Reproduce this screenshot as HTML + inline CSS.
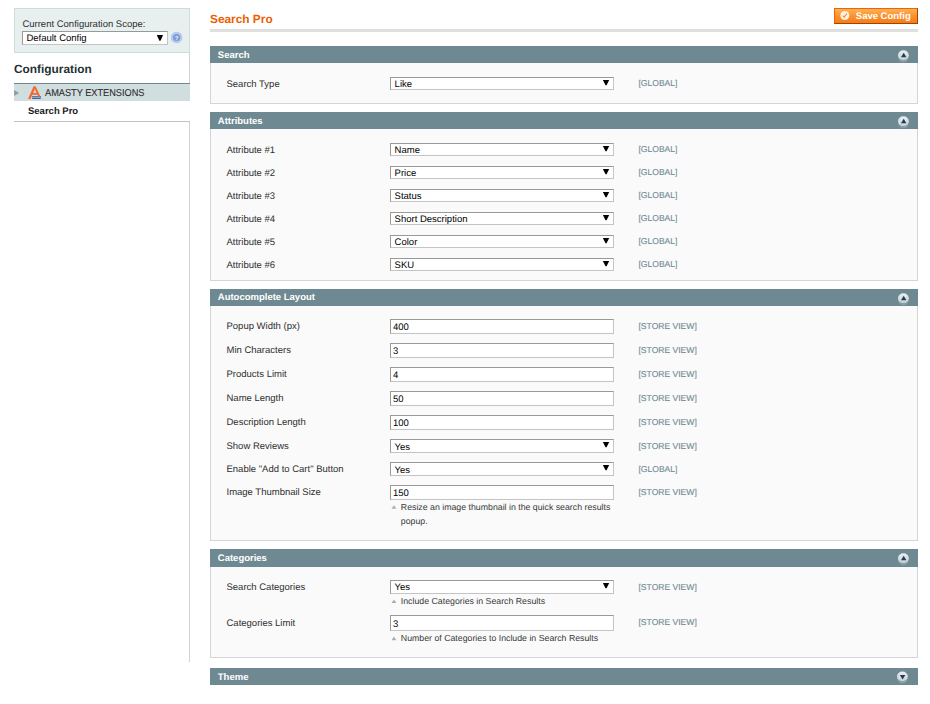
<!DOCTYPE html>
<html><head><meta charset="utf-8"><title>Search Pro / Configuration</title>
<style>
html,body{margin:0;padding:0;background:#fff;}
body{width:930px;height:704px;position:relative;overflow:hidden;font-family:"Liberation Sans",Arial,Helvetica,sans-serif;font-size:9.5px;color:#2f2f2f;text-rendering:geometricPrecision;}
h3,h4,p,dl,dt,dd,label,span,button{margin:0;padding:0;font-weight:normal;font-family:inherit;}
.abs,.t,.head,.fs,.sel,.inp,.btn,.switcher{position:absolute;}
.t{white-space:nowrap;transform-origin:0 0;}
.switcher{left:14px;top:8px;width:176px;height:45px;box-sizing:border-box;background:#e7efef;border:1px solid #cddddd;}
.head{left:210px;width:708px;background:#6f8992;}
.fs{left:210px;width:708px;box-sizing:border-box;background:#fafafa;border:1px solid #d6d6d6;border-top:0;}
.sel,.inp{box-sizing:border-box;background:#fff;border:1px solid;border-color:#999 #c4c4c4 #c4c4c4 #999;}
.btn{left:834px;top:8px;width:84px;height:16px;box-sizing:border-box;border:1px solid;border-color:#ed6502 #a04300 #a04300 #ed6502;background:linear-gradient(#ffb056 0%,#fb9430 45%,#f77c16 100%);}
</style></head>
<body>
<aside>
<div class="switcher"></div>
<label class="t" style="left:22.4px;top:18px;font-size:9.5px;line-height:14.25px;color:#2f2f2f;">Current Configuration Scope:</label>
<div class="sel" style="left:22px;top:31px;width:146px;height:14px"></div>
<span class="t" style="left:26.4px;top:32px;font-size:9.5px;line-height:14.25px;color:#000;">Default Config</span>
<svg class="abs" style="left:156px;top:35px" width="8" height="7"><g transform="translate(0.8 0.1)"><path d="M0 0 L6.3 0 L3.7 5.7 L2.6 5.7 Z" fill="#000"/></g></svg>
<svg class="abs" style="left:170px;top:31px" width="13" height="13"><g transform="translate(0.6 0.5)"><circle cx="6" cy="6" r="5.75" fill="#afc4e6"/><circle cx="6" cy="6" r="4.7" fill="none" stroke="#c6d6ee" stroke-width="0.5"/><circle cx="6" cy="6" r="3.6" fill="#7b9edb"/><text x="6" y="8" font-size="5.6" font-weight="bold" fill="#f4f8fd" text-anchor="middle" font-family="Liberation Sans, sans-serif">?</text></g></svg>
<h3 class="t" style="left:14px;top:61px;font-size:11.875px;line-height:17.81px;color:#253033;font-weight:bold;">Configuration</h3>
<div class="abs" style="left:189px;top:53px;width:1px;height:609px;background:#d3d3d3"></div>
<dl>
<div class="abs" style="left:14px;top:83px;width:176px;height:18px;background:#d1dedf;border-top:1px solid #6f8992;box-sizing:border-box"></div>
<svg class="abs" style="left:14px;top:89px" width="7" height="8"><g transform="translate(0.1 0.9)"><path d="M0 0 L5 3.1 L0 6.2 Z" fill="#8a9ea6"/></g></svg>
<svg class="abs" style="left:28px;top:86px" width="14" height="14"><g transform="translate(0 0.1)"><path d="M0 12.9 L5.6 0.1 L7.6 0.1 L12.9 11.4 L10.7 11.4 L9.4 8.7 L4.4 8.7 L2.5 12.9 Z M5.3 6.8 L8.5 6.8 L6.7 2.8 Z" fill="#f26a33" fill-rule="evenodd"/><rect x="4.3" y="9.9" width="8.6" height="2.9" fill="#3c5482"/><text x="4.7" y="12.2" font-size="2.6" font-weight="bold" fill="#dfe6f2" font-family="Liberation Sans, sans-serif">amasty</text></g></svg>
<dt class="t" style="left:45.0px;top:86px;font-size:10px;line-height:15.0px;color:#2b2b2b;transform:scaleX(0.919);-webkit-text-stroke:0.1px #2b2b2b;">AMASTY EXTENSIONS</dt>
<div class="abs" style="left:14px;top:101px;width:177px;height:20px;background:#fff"></div>
<dd class="t" style="left:28px;top:105px;font-size:9.5px;line-height:14.25px;color:#1c1c1c;font-weight:bold;">Search Pro</dd>
</dl>
<div class="abs" style="left:14px;top:121px;width:176px;height:1px;background:#c3c3c3"></div>
</aside>
<main>
<header>
<h3 class="t" style="left:210px;top:11px;font-size:11.875px;line-height:17.81px;color:#eb5e00;font-weight:bold;">Search Pro</h3>
<div class="abs" style="left:210px;top:29px;width:708px;height:3px;background:#dfdfdf"></div>
<button class="btn" type="button"></button>
<svg class="abs" style="left:839px;top:10px" width="11" height="11"><g transform="translate(0.8 0.5)"><circle cx="5" cy="5" r="4.5" fill="#fff4e6"/><path d="M2.9 5.1 L4.4 6.7 L7.2 3.2" stroke="#f68d36" stroke-width="1.15" fill="none"/></g></svg>
<span class="t" style="left:855.8px;top:10px;font-size:9.5px;line-height:14.25px;color:#fff;font-weight:bold;">Save Config</span>
</header>
<section>
<div class="head" style="top:46px;height:17px"></div>
<h4 class="t" style="left:217.8px;top:49px;font-size:9.5px;line-height:14.25px;color:#fff;font-weight:bold;">Search</h4>
<svg class="abs" style="left:896px;top:48px" width="15" height="17"><g transform="translate(0.4 0.1)"><defs><linearGradient id="g46" x1="0" y1="0" x2="0" y2="1"><stop offset="0" stop-color="#e9eef1"/><stop offset="1" stop-color="#c5d2d7"/></linearGradient></defs><g transform="translate(7 7)"><circle cx="0" cy="1.9" r="5.2" fill="#a9bbc2" opacity="0.45"/><ellipse cx="0" cy="0.1" rx="5.4" ry="4.9" fill="url(#g46)"/><path d="M-2.4 2.1 L3.0 2.1 L0.3 -2.3 Z" fill="#22395a"/></g></g></svg>
<div class="fs" style="top:63px;height:41px"></div>
<label class="t" style="left:226.5px;top:78px;font-size:9.5px;line-height:14.25px;color:#2f2f2f;">Search Type</label>
<div class="sel" style="left:390px;top:77px;width:224px;height:13px"></div>
<span class="t" style="left:394.6px;top:78px;font-size:9.5px;line-height:14.25px;color:#000;">Like</span>
<svg class="abs" style="left:602px;top:80px" width="8" height="7"><g transform="translate(0.9 0.05)"><path d="M0 0 L6.3 0 L3.7 5.3 L2.6 5.3 Z" fill="#000"/></g></svg>
<span class="t" style="left:638.5px;top:77px;font-size:8.55px;line-height:12.83px;color:#6f8992;-webkit-text-stroke:0.1px #6f8992;">[GLOBAL]</span>
</section>
<section>
<div class="head" style="top:112px;height:17px"></div>
<h4 class="t" style="left:217.8px;top:115px;font-size:9.5px;line-height:14.25px;color:#fff;font-weight:bold;">Attributes</h4>
<svg class="abs" style="left:896px;top:114px" width="15" height="17"><g transform="translate(0.4 0.1)"><defs><linearGradient id="g112" x1="0" y1="0" x2="0" y2="1"><stop offset="0" stop-color="#e9eef1"/><stop offset="1" stop-color="#c5d2d7"/></linearGradient></defs><g transform="translate(7 7)"><circle cx="0" cy="1.9" r="5.2" fill="#a9bbc2" opacity="0.45"/><ellipse cx="0" cy="0.1" rx="5.4" ry="4.9" fill="url(#g112)"/><path d="M-2.4 2.1 L3.0 2.1 L0.3 -2.3 Z" fill="#22395a"/></g></g></svg>
<div class="fs" style="top:129px;height:152px"></div>
<label class="t" style="left:226.5px;top:144px;font-size:9.5px;line-height:14.25px;color:#2f2f2f;">Attribute #1</label>
<div class="sel" style="left:390px;top:143px;width:224px;height:13px"></div>
<span class="t" style="left:394.6px;top:144px;font-size:9.5px;line-height:14.25px;color:#000;">Name</span>
<svg class="abs" style="left:602px;top:146px" width="8" height="7"><g transform="translate(0.9 0.05)"><path d="M0 0 L6.3 0 L3.7 5.3 L2.6 5.3 Z" fill="#000"/></g></svg>
<span class="t" style="left:638.5px;top:143px;font-size:8.55px;line-height:12.83px;color:#6f8992;-webkit-text-stroke:0.1px #6f8992;">[GLOBAL]</span>
<label class="t" style="left:226.5px;top:167px;font-size:9.5px;line-height:14.25px;color:#2f2f2f;">Attribute #2</label>
<div class="sel" style="left:390px;top:166px;width:224px;height:13px"></div>
<span class="t" style="left:394.6px;top:167px;font-size:9.5px;line-height:14.25px;color:#000;">Price</span>
<svg class="abs" style="left:602px;top:169px" width="8" height="7"><g transform="translate(0.9 0.05)"><path d="M0 0 L6.3 0 L3.7 5.3 L2.6 5.3 Z" fill="#000"/></g></svg>
<span class="t" style="left:638.5px;top:166px;font-size:8.55px;line-height:12.83px;color:#6f8992;-webkit-text-stroke:0.1px #6f8992;">[GLOBAL]</span>
<label class="t" style="left:226.5px;top:190px;font-size:9.5px;line-height:14.25px;color:#2f2f2f;">Attribute #3</label>
<div class="sel" style="left:390px;top:189px;width:224px;height:13px"></div>
<span class="t" style="left:394.6px;top:190px;font-size:9.5px;line-height:14.25px;color:#000;">Status</span>
<svg class="abs" style="left:602px;top:192px" width="8" height="7"><g transform="translate(0.9 0.05)"><path d="M0 0 L6.3 0 L3.7 5.3 L2.6 5.3 Z" fill="#000"/></g></svg>
<span class="t" style="left:638.5px;top:189px;font-size:8.55px;line-height:12.83px;color:#6f8992;-webkit-text-stroke:0.1px #6f8992;">[GLOBAL]</span>
<label class="t" style="left:226.5px;top:213px;font-size:9.5px;line-height:14.25px;color:#2f2f2f;">Attribute #4</label>
<div class="sel" style="left:390px;top:212px;width:224px;height:13px"></div>
<span class="t" style="left:394.6px;top:213px;font-size:9.5px;line-height:14.25px;color:#000;">Short Description</span>
<svg class="abs" style="left:602px;top:215px" width="8" height="7"><g transform="translate(0.9 0.05)"><path d="M0 0 L6.3 0 L3.7 5.3 L2.6 5.3 Z" fill="#000"/></g></svg>
<span class="t" style="left:638.5px;top:212px;font-size:8.55px;line-height:12.83px;color:#6f8992;-webkit-text-stroke:0.1px #6f8992;">[GLOBAL]</span>
<label class="t" style="left:226.5px;top:236px;font-size:9.5px;line-height:14.25px;color:#2f2f2f;">Attribute #5</label>
<div class="sel" style="left:390px;top:235px;width:224px;height:13px"></div>
<span class="t" style="left:394.6px;top:236px;font-size:9.5px;line-height:14.25px;color:#000;">Color</span>
<svg class="abs" style="left:602px;top:238px" width="8" height="7"><g transform="translate(0.9 0.05)"><path d="M0 0 L6.3 0 L3.7 5.3 L2.6 5.3 Z" fill="#000"/></g></svg>
<span class="t" style="left:638.5px;top:235px;font-size:8.55px;line-height:12.83px;color:#6f8992;-webkit-text-stroke:0.1px #6f8992;">[GLOBAL]</span>
<label class="t" style="left:226.5px;top:259px;font-size:9.5px;line-height:14.25px;color:#2f2f2f;">Attribute #6</label>
<div class="sel" style="left:390px;top:258px;width:224px;height:13px"></div>
<span class="t" style="left:394.6px;top:259px;font-size:9.5px;line-height:14.25px;color:#000;">SKU</span>
<svg class="abs" style="left:602px;top:261px" width="8" height="7"><g transform="translate(0.9 0.05)"><path d="M0 0 L6.3 0 L3.7 5.3 L2.6 5.3 Z" fill="#000"/></g></svg>
<span class="t" style="left:638.5px;top:258px;font-size:8.55px;line-height:12.83px;color:#6f8992;-webkit-text-stroke:0.1px #6f8992;">[GLOBAL]</span>
</section>
<section>
<div class="head" style="top:289px;height:17px"></div>
<h4 class="t" style="left:217.8px;top:291px;font-size:9.5px;line-height:14.25px;color:#fff;font-weight:bold;">Autocomplete Layout</h4>
<svg class="abs" style="left:896px;top:291px" width="15" height="17"><g transform="translate(0.4 0.1)"><defs><linearGradient id="g289" x1="0" y1="0" x2="0" y2="1"><stop offset="0" stop-color="#e9eef1"/><stop offset="1" stop-color="#c5d2d7"/></linearGradient></defs><g transform="translate(7 7)"><circle cx="0" cy="1.9" r="5.2" fill="#a9bbc2" opacity="0.45"/><ellipse cx="0" cy="0.1" rx="5.4" ry="4.9" fill="url(#g289)"/><path d="M-2.4 2.1 L3.0 2.1 L0.3 -2.3 Z" fill="#22395a"/></g></g></svg>
<div class="fs" style="top:306px;height:235px"></div>
<label class="t" style="left:226.5px;top:320px;font-size:9.5px;line-height:14.25px;color:#2f2f2f;">Popup Width (px)</label>
<div class="inp" style="left:390px;top:319px;width:224px;height:15px"></div>
<span class="t" style="left:393px;top:321px;font-size:9.5px;line-height:14.25px;color:#000;">400</span>
<span class="t" style="left:638.5px;top:320px;font-size:8.55px;line-height:12.83px;color:#6f8992;-webkit-text-stroke:0.1px #6f8992;">[STORE VIEW]</span>
<label class="t" style="left:226.5px;top:344px;font-size:9.5px;line-height:14.25px;color:#2f2f2f;">Min Characters</label>
<div class="inp" style="left:390px;top:343px;width:224px;height:15px"></div>
<span class="t" style="left:393px;top:345px;font-size:9.5px;line-height:14.25px;color:#000;">3</span>
<span class="t" style="left:638.5px;top:344px;font-size:8.55px;line-height:12.83px;color:#6f8992;-webkit-text-stroke:0.1px #6f8992;">[STORE VIEW]</span>
<label class="t" style="left:226.5px;top:368px;font-size:9.5px;line-height:14.25px;color:#2f2f2f;">Products Limit</label>
<div class="inp" style="left:390px;top:367px;width:224px;height:15px"></div>
<span class="t" style="left:393px;top:369px;font-size:9.5px;line-height:14.25px;color:#000;">4</span>
<span class="t" style="left:638.5px;top:368px;font-size:8.55px;line-height:12.83px;color:#6f8992;-webkit-text-stroke:0.1px #6f8992;">[STORE VIEW]</span>
<label class="t" style="left:226.5px;top:392px;font-size:9.5px;line-height:14.25px;color:#2f2f2f;">Name Length</label>
<div class="inp" style="left:390px;top:391px;width:224px;height:15px"></div>
<span class="t" style="left:393px;top:393px;font-size:9.5px;line-height:14.25px;color:#000;">50</span>
<span class="t" style="left:638.5px;top:392px;font-size:8.55px;line-height:12.83px;color:#6f8992;-webkit-text-stroke:0.1px #6f8992;">[STORE VIEW]</span>
<label class="t" style="left:226.5px;top:416px;font-size:9.5px;line-height:14.25px;color:#2f2f2f;">Description Length</label>
<div class="inp" style="left:390px;top:415px;width:224px;height:15px"></div>
<span class="t" style="left:393px;top:417px;font-size:9.5px;line-height:14.25px;color:#000;">100</span>
<span class="t" style="left:638.5px;top:416px;font-size:8.55px;line-height:12.83px;color:#6f8992;-webkit-text-stroke:0.1px #6f8992;">[STORE VIEW]</span>
<label class="t" style="left:226.5px;top:440px;font-size:9.5px;line-height:14.25px;color:#2f2f2f;">Show Reviews</label>
<div class="sel" style="left:390px;top:439px;width:224px;height:14px"></div>
<span class="t" style="left:394.6px;top:441px;font-size:9.5px;line-height:14.25px;color:#000;">Yes</span>
<svg class="abs" style="left:602px;top:442px" width="8" height="7"><g transform="translate(0.9 0.05)"><path d="M0 0 L6.3 0 L3.7 5.3 L2.6 5.3 Z" fill="#000"/></g></svg>
<span class="t" style="left:638.5px;top:440px;font-size:8.55px;line-height:12.83px;color:#6f8992;-webkit-text-stroke:0.1px #6f8992;">[STORE VIEW]</span>
<label class="t" style="left:226.5px;top:463px;font-size:9.5px;line-height:14.25px;color:#2f2f2f;">Enable "Add to Cart" Button</label>
<div class="sel" style="left:390px;top:462px;width:224px;height:14px"></div>
<span class="t" style="left:394.6px;top:464px;font-size:9.5px;line-height:14.25px;color:#000;">Yes</span>
<svg class="abs" style="left:602px;top:465px" width="8" height="7"><g transform="translate(0.9 0.05)"><path d="M0 0 L6.3 0 L3.7 5.3 L2.6 5.3 Z" fill="#000"/></g></svg>
<span class="t" style="left:638.5px;top:463px;font-size:8.55px;line-height:12.83px;color:#6f8992;-webkit-text-stroke:0.1px #6f8992;">[GLOBAL]</span>
<label class="t" style="left:226.5px;top:486px;font-size:9.5px;line-height:14.25px;color:#2f2f2f;">Image Thumbnail Size</label>
<div class="inp" style="left:390px;top:485px;width:224px;height:15px"></div>
<span class="t" style="left:393px;top:487px;font-size:9.5px;line-height:14.25px;color:#000;">150</span>
<span class="t" style="left:638.5px;top:486px;font-size:8.55px;line-height:12.83px;color:#6f8992;-webkit-text-stroke:0.1px #6f8992;">[STORE VIEW]</span>
<svg class="abs" style="left:391px;top:505px" width="6" height="5"><g transform="translate(0.5 0.2)"><path d="M0 3.6 L2.45 0 L4.9 3.6 Z" fill="#9cb2bc"/></g></svg>
<p class="t" style="left:400.8px;top:500px;font-size:8.78px;line-height:14.3px;color:#383838;width:216px;white-space:normal;">Resize an image thumbnail in the quick search results popup.</p>
</section>
<section>
<div class="head" style="top:549px;height:18px"></div>
<h4 class="t" style="left:217.8px;top:552px;font-size:9.5px;line-height:14.25px;color:#fff;font-weight:bold;">Categories</h4>
<svg class="abs" style="left:896px;top:551px" width="15" height="17"><g transform="translate(0.4 0.1)"><defs><linearGradient id="g549" x1="0" y1="0" x2="0" y2="1"><stop offset="0" stop-color="#e9eef1"/><stop offset="1" stop-color="#c5d2d7"/></linearGradient></defs><g transform="translate(7 7)"><circle cx="0" cy="1.9" r="5.2" fill="#a9bbc2" opacity="0.45"/><ellipse cx="0" cy="0.1" rx="5.4" ry="4.9" fill="url(#g549)"/><path d="M-2.4 2.1 L3.0 2.1 L0.3 -2.3 Z" fill="#22395a"/></g></g></svg>
<div class="fs" style="top:567px;height:91px"></div>
<label class="t" style="left:226.5px;top:581px;font-size:9.5px;line-height:14.25px;color:#2f2f2f;">Search Categories</label>
<div class="sel" style="left:390px;top:580px;width:224px;height:14px"></div>
<span class="t" style="left:394.6px;top:581px;font-size:9.5px;line-height:14.25px;color:#000;">Yes</span>
<svg class="abs" style="left:602px;top:583px" width="8" height="7"><g transform="translate(0.9 0.05)"><path d="M0 0 L6.3 0 L3.7 5.3 L2.6 5.3 Z" fill="#000"/></g></svg>
<span class="t" style="left:638.5px;top:581px;font-size:8.55px;line-height:12.83px;color:#6f8992;-webkit-text-stroke:0.1px #6f8992;">[STORE VIEW]</span>
<svg class="abs" style="left:391px;top:599px" width="6" height="5"><g transform="translate(0.5 0.4)"><path d="M0 3.6 L2.45 0 L4.9 3.6 Z" fill="#9cb2bc"/></g></svg>
<p class="t" style="left:400.8px;top:594px;font-size:8.78px;line-height:14.3px;color:#383838;width:216px;white-space:normal;">Include Categories in Search Results</p>
<label class="t" style="left:226.5px;top:617px;font-size:9.5px;line-height:14.25px;color:#2f2f2f;">Categories Limit</label>
<div class="inp" style="left:390px;top:615px;width:224px;height:16px"></div>
<span class="t" style="left:393px;top:618px;font-size:9.5px;line-height:14.25px;color:#000;">3</span>
<span class="t" style="left:638.5px;top:616px;font-size:8.55px;line-height:12.83px;color:#6f8992;-webkit-text-stroke:0.1px #6f8992;">[STORE VIEW]</span>
<svg class="abs" style="left:391px;top:636px" width="6" height="5"><g transform="translate(0.5 0.6)"><path d="M0 3.6 L2.45 0 L4.9 3.6 Z" fill="#9cb2bc"/></g></svg>
<p class="t" style="left:400.8px;top:631px;font-size:8.78px;line-height:14.3px;color:#383838;width:216px;white-space:normal;">Number of Categories to Include in Search Results</p>
</section>
<section>
<div class="head" style="top:668px;height:17px"></div>
<h4 class="t" style="left:217.8px;top:671px;font-size:9.5px;line-height:14.25px;color:#fff;font-weight:bold;">Theme</h4>
<svg class="abs" style="left:895px;top:669px" width="15" height="17"><g transform="translate(0.4 0.3)"><defs><linearGradient id="g668" x1="0" y1="0" x2="0" y2="1"><stop offset="0" stop-color="#e9eef1"/><stop offset="1" stop-color="#c5d2d7"/></linearGradient></defs><g transform="translate(7 7)"><circle cx="0" cy="1.9" r="5.2" fill="#a9bbc2" opacity="0.45"/><ellipse cx="0" cy="0.1" rx="5.4" ry="4.9" fill="url(#g668)"/><path d="M-2.5 -1.2 L2.9 -1.2 L0.2 3.1 Z" fill="#22395a"/></g></g></svg>
</section>
</main>
</body></html>
